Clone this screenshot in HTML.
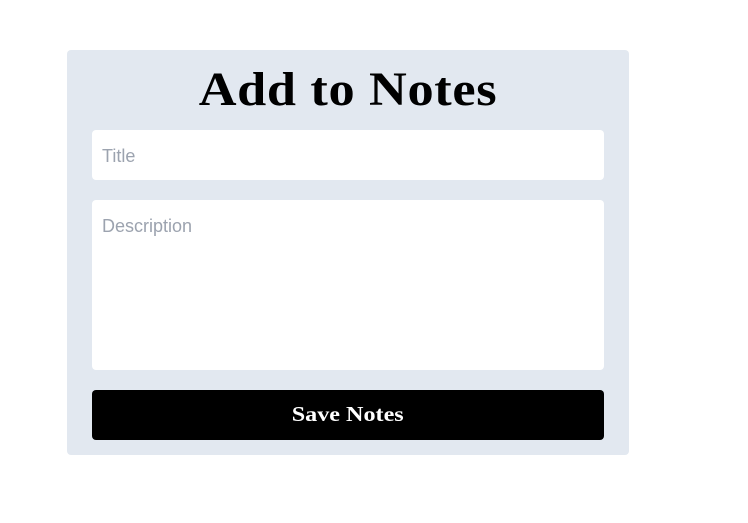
<!DOCTYPE html>
<html><head><style>
body{margin:0;background:#fff;width:748px;height:523px;position:relative;overflow:hidden}
.card{position:absolute;left:67px;top:50px;width:562px;height:405px;background:#e2e8f0;border-radius:4px}
h1{position:absolute;left:0;width:562px;top:12px;margin:0;text-align:center;font:bold 48px "Liberation Serif",serif;line-height:56px;letter-spacing:0.6px;transform:scaleX(1.09)}
.inp{position:absolute;left:25px;width:512px;background:#fff;border-radius:4px;font:18px "Liberation Sans",sans-serif;color:#9ca3af;box-sizing:border-box;padding-left:10px}
.btn{position:absolute;left:25px;top:340px;width:512px;height:50px;background:#000;border-radius:4px;color:#fff;text-align:center;line-height:54px}
.btn span{display:inline-block;font:bold 21px "Liberation Serif",serif;transform:scaleX(1.15)}
</style></head><body>
<div class="card">
<h1>Add to Notes</h1>
<div class="inp" style="top:80px;height:50px;line-height:52px">Title</div>
<div class="inp" style="top:150px;height:170px;padding-top:16px">Description</div>
<div class="btn"><span>Save Notes</span></div>
</div>
</body></html>
